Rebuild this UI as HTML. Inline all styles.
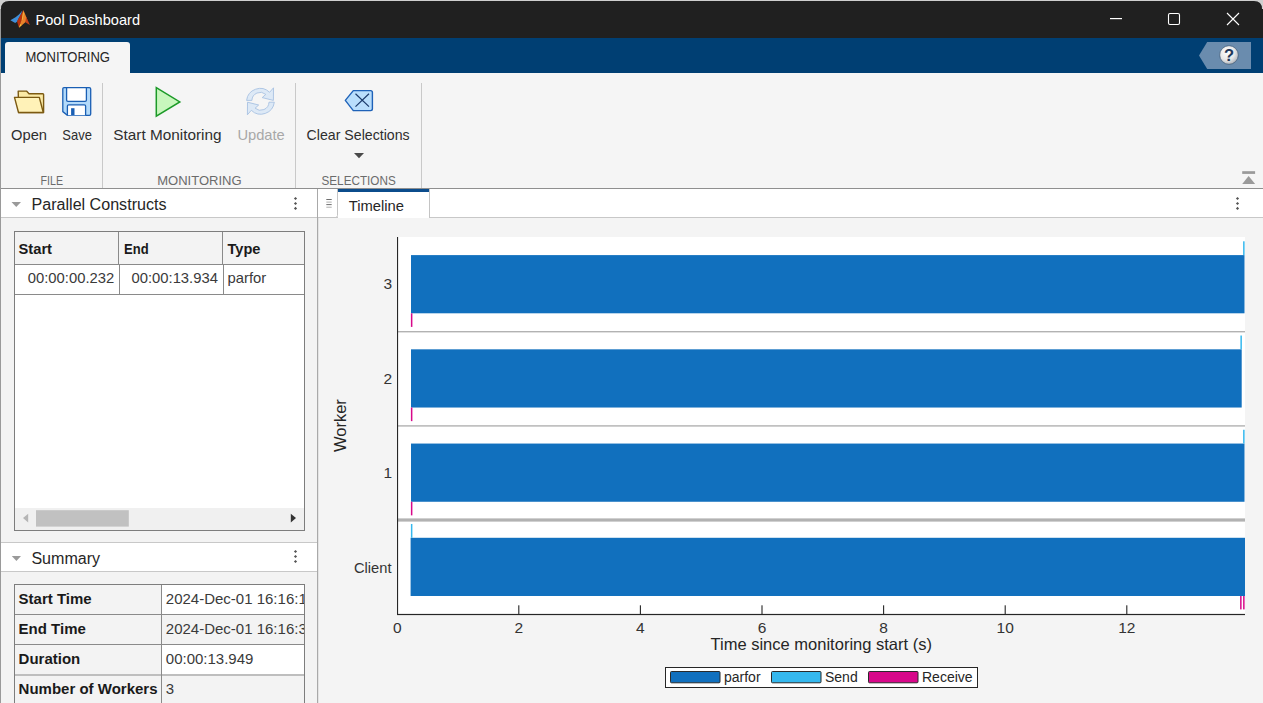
<!DOCTYPE html>
<html><head><meta charset="utf-8">
<style>
html,body{margin:0;padding:0;width:1263px;height:703px;overflow:hidden;background:#cfcfcf}
svg{display:block;font-family:"Liberation Sans",sans-serif}
</style></head><body>
<svg width="1263" height="703" viewBox="0 0 1263 703">
<rect x="0" y="0" width="1263" height="703" fill="#cfcfcf"/>
<path d="M1,9 Q1,1 9,1 L1254,1 Q1262,1 1262,9 L1263,9 L1263,703 L1,703 Z" fill="#202020"/>
<rect x="0" y="9" width="1" height="694" fill="#9a9a9a"/>
<text x="35.5" y="25" font-size="14.5" fill="#ffffff" textLength="104.5" lengthAdjust="spacingAndGlyphs">Pool Dashboard</text>
<polygon points="10.4,20.3 15.5,17.2 19,14.6 22.4,10.6 20.5,15.5 18.2,19.2 17.3,21.6 15.2,22.9" fill="#3f8fd8"/>
<polygon points="17.0,21.6 20.3,15 23.4,10.0 22.6,18.5 19.0,27.8" fill="#b5300e"/>
<polygon points="23.4,10.0 27.3,19.5 25.3,22.3 19.0,27.8 22.0,18.5" fill="#e9822a"/>
<polygon points="26.2,16.8 29.9,24.9 25.3,22.3" fill="#c8421a"/>
<polygon points="23.2,11.2 23.9,13.5 22.6,20 21.8,19.5" fill="#f5b73a"/>
<polygon points="19.0,27.8 20.2,24.2 21.6,25.0" fill="#f7cd3a"/>
<rect x="1110" y="18" width="12" height="1.2" fill="#ffffff"/>
<rect x="1168.5" y="13.5" width="11" height="11" rx="1.5" fill="none" stroke="#ffffff" stroke-width="1.1"/>
<path d="M1227,13 L1239,25 M1239,13 L1227,25" stroke="#ffffff" stroke-width="1.1"/>
<rect x="1" y="38" width="1262" height="35" fill="#003f73"/>
<path d="M5,73 L5,45 Q5,42 8,42 L127,42 Q130,42 130,45 L130,73 Z" fill="#f5f5f5"/>
<text x="25.5" y="62" font-size="14.5" fill="#262626" textLength="84.5" lengthAdjust="spacingAndGlyphs">MONITORING</text>
<polygon points="1199,55.4 1207.2,42 1251,42 1251,69 1207.2,69" fill="#6a8cae"/>
<defs><radialGradient id="hg" cx="0.4" cy="0.35" r="0.7"><stop offset="0" stop-color="#ffffff"/><stop offset="0.6" stop-color="#e6e6e6"/><stop offset="1" stop-color="#a9b0b8"/></radialGradient></defs>
<circle cx="1229" cy="55" r="9.3" fill="url(#hg)" stroke="#2f4a66" stroke-width="0.6"/>
<text x="1229" y="60.6" font-size="16.5" fill="#22395a" font-weight="700" text-anchor="middle">?</text>
<rect x="1" y="73" width="1262" height="115" fill="#f5f5f5"/>
<rect x="1" y="188" width="1262" height="1" fill="#8f8f8f"/>
<rect x="102" y="83" width="1" height="105" fill="#c9c9c9"/>
<rect x="295" y="83" width="1" height="105" fill="#c9c9c9"/>
<rect x="421" y="83" width="1" height="105" fill="#c9c9c9"/>
<path d="M18.2,91.1 L26.5,91.1 L29,93.7 L42.8,93.7 Q43.6,93.7 43.6,94.5 L43.6,112.5 L18.7,112.5 Z" fill="#fbeaa6" stroke="#7c5a12" stroke-width="1.4" stroke-linejoin="round"/>
<path d="M14.5,97.4 L39.3,97.4 L43.3,112.5 L18.5,112.5 Z" fill="#fff2b8" stroke="#7c5a12" stroke-width="1.4" stroke-linejoin="round"/>
<path d="M64,87.6 L89.2,87.6 Q90.7,87.6 90.7,89.1 L90.7,114 Q90.7,115.3 89.4,115.3 L67.4,115.3 L62.8,111.6 L62.8,88.8 Q62.8,87.6 64,87.6 Z" fill="#b3dafa" stroke="#1a5fb4" stroke-width="1.3"/>
<path d="M66.6,87.6 L86.4,87.6 L86.4,100 Q86.4,101.3 85.1,101.3 L67.9,101.3 Q66.6,101.3 66.6,100 Z" fill="#ffffff" stroke="#1a5fb4" stroke-width="1.3"/>
<path d="M67.4,115.3 L67.4,106 Q67.4,104.8 68.6,104.8 L84.4,104.8 Q85.6,104.8 85.6,106 L85.6,115.3" fill="#ffffff" stroke="#1a5fb4" stroke-width="1.3"/>
<rect x="71.1" y="108.2" width="3.4" height="6.8" fill="#1a5fb4"/>
<polygon points="156.3,87.6 179.8,101.9 156.3,116.2" fill="#c8f7bd" stroke="#1c9a28" stroke-width="1.5" stroke-linejoin="miter"/>
<g transform="translate(240,82)" fill="#dde9f6" stroke="#a8c2e2" stroke-width="0.9"><path d="M6.6,18.4 A13.6,13.6 0 0 1 29.6,10.3 L33.5,5.8 L33.4,18.4 L22.2,15.6 L25.8,12.4 A8.4,8.4 0 0 0 11.9,18.4 Z"/><path d="M34.3,20.2 A13.6,13.6 0 0 1 11.3,28.3 L7.4,32.8 L7.5,20.2 L18.7,23.0 L15.1,26.2 A8.4,8.4 0 0 0 29.0,20.2 Z"/></g>
<path d="M345.3,100.4 L353.3,90.6 L370.6,90.6 Q372.4,90.6 372.4,92.4 L372.4,108.8 Q372.4,110.6 370.6,110.6 L353.3,110.6 Z" fill="#b9defc" stroke="#1f62b8" stroke-width="1.4" stroke-linejoin="round"/>
<path d="M355.5,93.8 L369,106.6 M369,93.8 L355.5,106.6" stroke="#1b3a6b" stroke-width="1.2"/>
<polygon points="354,153 364,153 359,158.3" fill="#4a4a4a"/>
<rect x="1242.2" y="171.2" width="12.9" height="2.7" fill="#9a9a9a"/>
<polygon points="1248.6,175.9 1255.1,183.9 1242.2,183.9" fill="#9a9a9a"/>
<text x="11" y="140" font-size="15" fill="#2e2e2e" textLength="36" lengthAdjust="spacingAndGlyphs">Open</text>
<text x="62.3" y="140" font-size="15" fill="#2e2e2e" textLength="29.6" lengthAdjust="spacingAndGlyphs">Save</text>
<text x="113.3" y="140" font-size="15" fill="#2e2e2e" textLength="108.2" lengthAdjust="spacingAndGlyphs">Start Monitoring</text>
<text x="237.4" y="140" font-size="15" fill="#a8a8a8" textLength="47.4" lengthAdjust="spacingAndGlyphs">Update</text>
<text x="306.6" y="140" font-size="15" fill="#2e2e2e" textLength="103" lengthAdjust="spacingAndGlyphs">Clear Selections</text>
<text x="40.5" y="184.5" font-size="13.5" fill="#6b6b6b" textLength="22.5" lengthAdjust="spacingAndGlyphs">FILE</text>
<text x="157.2" y="184.5" font-size="13.5" fill="#6b6b6b" textLength="84.4" lengthAdjust="spacingAndGlyphs">MONITORING</text>
<text x="321.5" y="184.5" font-size="13.5" fill="#6b6b6b" textLength="74.2" lengthAdjust="spacingAndGlyphs">SELECTIONS</text>
<rect x="1" y="189" width="316" height="514" fill="#f3f3f3"/>
<rect x="1" y="189" width="316" height="28" fill="#ffffff"/>
<rect x="1" y="217" width="316" height="1" fill="#c8c8c8"/>
<polygon points="11.5,202 21,202 16.25,207" fill="#9a9a9a"/>
<text x="31.5" y="210" font-size="16" fill="#262626" textLength="135" lengthAdjust="spacingAndGlyphs">Parallel Constructs</text>
<polygon points="293.9,198.5 295.5,196.9 297.1,198.5 295.5,200.1" fill="#555555"/>
<polygon points="293.9,203.5 295.5,201.9 297.1,203.5 295.5,205.1" fill="#555555"/>
<polygon points="293.9,208.4 295.5,206.8 297.1,208.4 295.5,210.0" fill="#555555"/>
<rect x="14" y="231" width="291" height="300" fill="#7d7d7d"/>
<rect x="15" y="232" width="289" height="298" fill="#ffffff"/>
<rect x="15" y="232" width="289" height="32" fill="#f3f3f3"/>
<rect x="15" y="264" width="289" height="1" fill="#8a8a8a"/>
<rect x="118" y="232" width="1" height="32" fill="#8a8a8a"/>
<rect x="222" y="232" width="1" height="32" fill="#8a8a8a"/>
<rect x="119" y="265" width="1" height="29" fill="#8a8a8a"/>
<rect x="223" y="265" width="1" height="29" fill="#8a8a8a"/>
<rect x="15" y="294" width="289" height="1" fill="#8a8a8a"/>
<text x="18.5" y="253.8" font-size="14.6" fill="#1a1a1a" font-weight="700" textLength="33.5" lengthAdjust="spacingAndGlyphs">Start</text>
<text x="124" y="253.8" font-size="14.6" fill="#1a1a1a" font-weight="700" textLength="24.6" lengthAdjust="spacingAndGlyphs">End</text>
<text x="227.5" y="253.8" font-size="14.6" fill="#1a1a1a" font-weight="700">Type</text>
<text x="27.8" y="283" font-size="14.8" fill="#3a3a3a" textLength="86.4" lengthAdjust="spacingAndGlyphs">00:00:00.232</text>
<text x="131.5" y="283" font-size="14.8" fill="#3a3a3a" textLength="86.4" lengthAdjust="spacingAndGlyphs">00:00:13.934</text>
<text x="227.5" y="283" font-size="14.8" fill="#3a3a3a">parfor</text>
<rect x="15" y="508" width="289" height="22" fill="#f0f0f0"/>
<rect x="36" y="510.2" width="92.8" height="16.4" fill="#c1c1c1"/>
<polygon points="28.2,513.8 28.2,522.4 23,518.1" fill="#b5b5b5"/>
<polygon points="290.8,513.8 290.8,522.4 296,518.1" fill="#333333"/>
<rect x="1" y="542" width="316" height="1" fill="#c8c8c8"/>
<rect x="1" y="543" width="316" height="28" fill="#ffffff"/>
<rect x="1" y="571" width="316" height="1" fill="#c8c8c8"/>
<polygon points="11.8,556 21,556 16.4,561" fill="#9a9a9a"/>
<text x="31.4" y="564" font-size="16" fill="#262626" textLength="68.7" lengthAdjust="spacingAndGlyphs">Summary</text>
<polygon points="293.9,551.5 295.5,549.9 297.1,551.5 295.5,553.1" fill="#555555"/>
<polygon points="293.9,556.5 295.5,554.9 297.1,556.5 295.5,558.1" fill="#555555"/>
<polygon points="293.9,561.5 295.5,559.9 297.1,561.5 295.5,563.1" fill="#555555"/>
<rect x="14" y="584" width="291" height="130" fill="#7d7d7d"/>
<rect x="15" y="585" width="289" height="128" fill="#f3f3f3"/>
<rect x="162" y="585" width="142" height="29" fill="#ffffff"/>
<rect x="162" y="645" width="142" height="29" fill="#ffffff"/>
<rect x="15" y="614" width="289" height="1" fill="#8a8a8a"/>
<rect x="15" y="644" width="289" height="1" fill="#8a8a8a"/>
<rect x="15" y="674.5" width="289" height="1" fill="#8a8a8a"/>
<rect x="161" y="585" width="1" height="118" fill="#8a8a8a"/>
<clipPath id="sc"><rect x="162" y="585" width="142" height="118"/></clipPath>
<text x="18.6" y="603.6" font-size="15" fill="#1a1a1a" font-weight="700">Start Time</text>
<text x="18.6" y="633.6" font-size="15" fill="#1a1a1a" font-weight="700">End Time</text>
<text x="18.6" y="663.6" font-size="15" fill="#1a1a1a" font-weight="700">Duration</text>
<text x="18.6" y="693.6" font-size="15" fill="#1a1a1a" font-weight="700">Number of Workers</text>
<g clip-path="url(#sc)">
<text x="165.8" y="603.6" font-size="15" fill="#3a3a3a">2024-Dec-01 16:16:14</text>
<text x="165.8" y="633.6" font-size="15" fill="#3a3a3a">2024-Dec-01 16:16:38</text>
<text x="165.8" y="663.6" font-size="15" fill="#3a3a3a">00:00:13.949</text>
<text x="165.8" y="693.6" font-size="15" fill="#3a3a3a">3</text>
</g>
<rect x="317" y="189" width="1" height="514" fill="#a9a9a9"/>
<rect x="318" y="189" width="945" height="28" fill="#ffffff"/>
<rect x="318" y="217" width="945" height="1" fill="#c8c8c8"/>
<path d="M318,217.5 L335.5,217.5 Q337.5,217.5 337.5,215.5 L337.5,189" fill="none" stroke="#c4c4c4" stroke-width="1"/>
<rect x="326.3" y="199.0" width="5.4" height="1" fill="#6e6e6e"/>
<rect x="326.3" y="201.6" width="5.4" height="1" fill="#b0b0b0"/>
<rect x="326.3" y="204.1" width="5.4" height="1" fill="#6e6e6e"/>
<rect x="326.3" y="206.7" width="5.4" height="1" fill="#b0b0b0"/>
<rect x="338" y="218" width="92" height="0.1" fill="#ffffff"/>
<rect x="338" y="189" width="91" height="29" fill="#ffffff"/>
<rect x="338" y="189" width="91" height="3" fill="#0b4c8c"/>
<rect x="429" y="189" width="1" height="29" fill="#c4c4c4"/>
<text x="348.7" y="211.2" font-size="14.8" fill="#262626" textLength="55.3" lengthAdjust="spacingAndGlyphs">Timeline</text>
<polygon points="1235.9,198.5 1237.5,196.9 1239.1,198.5 1237.5,200.1" fill="#555555"/>
<polygon points="1235.9,203.5 1237.5,201.9 1239.1,203.5 1237.5,205.1" fill="#555555"/>
<polygon points="1235.9,208.4 1237.5,206.8 1239.1,208.4 1237.5,210.0" fill="#555555"/>
<rect x="318" y="218" width="945" height="485" fill="#f4f4f4"/>
<rect x="318" y="218" width="1" height="485" fill="#e4e4e4"/>
<rect x="397" y="237" width="848" height="378" fill="#ffffff"/>
<rect x="397" y="331" width="848" height="1.4" fill="#b2b2b2"/>
<rect x="397" y="425.2" width="848" height="1.4" fill="#b2b2b2"/>
<rect x="397" y="518.4" width="848" height="3.2" fill="#b2b2b2"/>
<rect x="411" y="255.1" width="833.5" height="58.2" fill="#1170be"/>
<rect x="411" y="349.33" width="830.7" height="58.2" fill="#1170be"/>
<rect x="411" y="443.56" width="833.5" height="58.2" fill="#1170be"/>
<rect x="410.6" y="537.79" width="834.4" height="58.2" fill="#1170be"/>
<rect x="410.9" y="313.3" width="1.5" height="13.6" fill="#d8088a"/>
<rect x="410.9" y="407.53" width="1.5" height="13.6" fill="#d8088a"/>
<rect x="410.9" y="501.76" width="1.5" height="13.6" fill="#d8088a"/>
<rect x="1243.1" y="241.3" width="1.5" height="13.8" fill="#35b8ee"/>
<rect x="1240.4" y="335.53" width="1.5" height="13.8" fill="#35b8ee"/>
<rect x="1243.1" y="429.76" width="1.5" height="13.8" fill="#35b8ee"/>
<rect x="410.9" y="523.99" width="1.5" height="13.8" fill="#35b8ee"/>
<rect x="1240.1" y="596.0" width="1.5" height="13.4" fill="#d8088a"/>
<rect x="1243.1" y="596.0" width="1.5" height="13.4" fill="#d8088a"/>
<rect x="397" y="237" width="1.1" height="377.5" fill="#262626"/>
<rect x="397" y="613.9" width="848" height="1.2" fill="#262626"/>
<text x="397.2" y="633.3" font-size="15.5" fill="#333333" text-anchor="middle">0</text>
<rect x="518.25" y="605.3" width="1.1" height="9" fill="#262626"/>
<text x="518.8" y="633.3" font-size="15.5" fill="#333333" text-anchor="middle">2</text>
<rect x="639.85" y="605.3" width="1.1" height="9" fill="#262626"/>
<text x="640.4" y="633.3" font-size="15.5" fill="#333333" text-anchor="middle">4</text>
<rect x="761.45" y="605.3" width="1.1" height="9" fill="#262626"/>
<text x="762.0" y="633.3" font-size="15.5" fill="#333333" text-anchor="middle">6</text>
<rect x="883.05" y="605.3" width="1.1" height="9" fill="#262626"/>
<text x="883.6" y="633.3" font-size="15.5" fill="#333333" text-anchor="middle">8</text>
<rect x="1004.65" y="605.3" width="1.1" height="9" fill="#262626"/>
<text x="1005.2" y="633.3" font-size="15.5" fill="#333333" text-anchor="middle">10</text>
<rect x="1126.25" y="605.3" width="1.1" height="9" fill="#262626"/>
<text x="1126.8" y="633.3" font-size="15.5" fill="#333333" text-anchor="middle">12</text>
<text x="392" y="289" font-size="15.5" fill="#333333" text-anchor="end">3</text>
<text x="392" y="384" font-size="15.5" fill="#333333" text-anchor="end">2</text>
<text x="392" y="478.3" font-size="15.5" fill="#333333" text-anchor="end">1</text>
<text x="354" y="573" font-size="15.5" fill="#333333" textLength="37.5" lengthAdjust="spacingAndGlyphs">Client</text>
<text x="0" y="0" transform="translate(346 425.6) rotate(-90)" text-anchor="middle" font-size="16.5" fill="#262626">Worker</text>
<text x="710.5" y="650" font-size="16.5" fill="#262626" textLength="221.5" lengthAdjust="spacingAndGlyphs">Time since monitoring start (s)</text>
<rect x="665.5" y="667.5" width="312" height="20" fill="#ffffff" stroke="#262626" stroke-width="1"/>
<rect x="670.5" y="671.5" width="49.5" height="11.3" rx="1" fill="#1170be" stroke="#2a2a2a" stroke-width="1"/>
<text x="724" y="681.5" font-size="14" fill="#262626">parfor</text>
<rect x="771.5" y="671.5" width="49.5" height="11.3" rx="1" fill="#35b8ee" stroke="#2a2a2a" stroke-width="1"/>
<text x="825" y="681.5" font-size="14" fill="#262626">Send</text>
<rect x="868.5" y="671.5" width="49.5" height="11.3" rx="1" fill="#d8088a" stroke="#2a2a2a" stroke-width="1"/>
<text x="922" y="681.5" font-size="14" fill="#262626">Receive</text>
</svg>
</body></html>
